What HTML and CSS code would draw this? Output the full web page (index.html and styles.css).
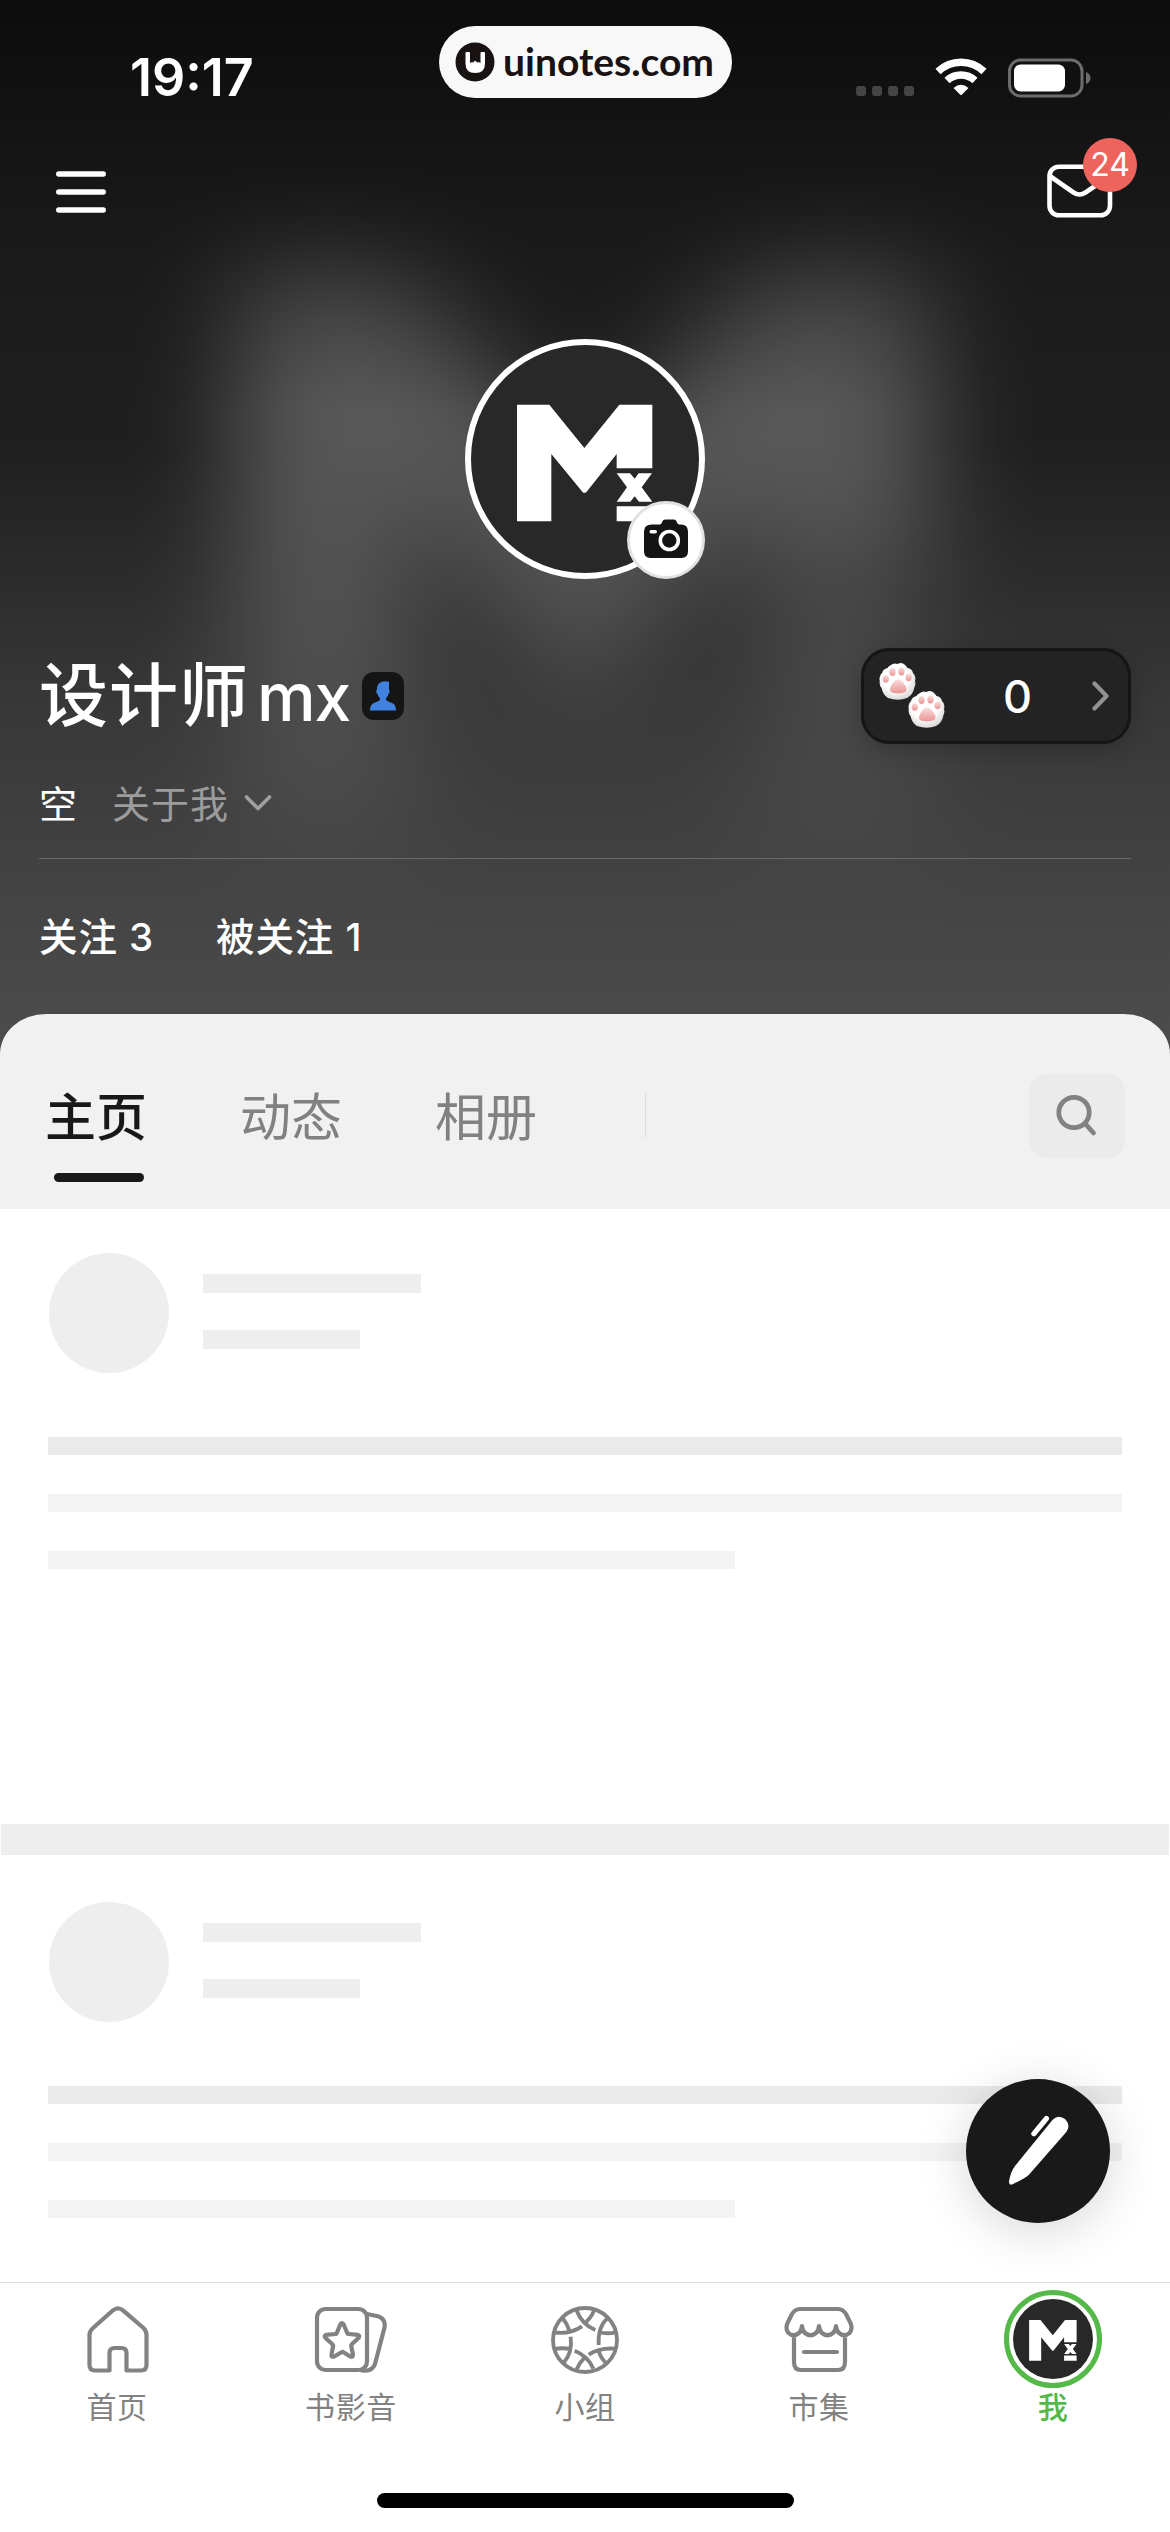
FILE: index.html
```html
<!DOCTYPE html>
<html lang="zh-CN">
<head>
<meta charset="utf-8">
<title>设计师mx</title>
<link rel="stylesheet" href="styles.css">
</head>
<body>
<svg width="0" height="0" class="defs" aria-hidden="true">
  <defs>
    <symbol id="logo-m" viewBox="93 75 684 684">
      <path d="M231 254H328L433 384L538 254H637V445H530V402L440 515Q433 522 427 515L334 402V604H231Z"/>
      <path d="M530 460H570L584 476L596 460H636L605 502L637 545H597L584 529L571 545H530L561 502Z"/>
      <path d="M530 559H637V604H530Z"/>
    </symbol>
    <radialGradient id="fur" cx=".45" cy=".4" r=".6"><stop offset=".6" stop-color="#fff"/><stop offset="1" stop-color="#dcdad8"/></radialGradient>
    <linearGradient id="pad" x1="0" y1="0" x2="0" y2="1"><stop offset="0" stop-color="#f9dcda"/><stop offset="1" stop-color="#ea9493"/></linearGradient>
    <symbol id="paw" viewBox="0 0 37 37">
      <path d="M12 2Q15-.5 18.500 1Q22-1 25.500 1.500Q28 3.500 28.500 5Q33 5.500 34 10Q37.500 13 36 18Q37 21 35.500 24Q34 32 28 35Q19 38.500 9 35Q4 32 2.500 25Q0 22 .8 18Q-.5 13 3 10Q4 6 8.500 5Q9 3.500 12 2Z" fill="url(#fur)"/>
      <ellipse cx="13.500" cy="9" rx="3.100" ry="3.900" fill="url(#pad)"/>
      <ellipse cx="22.500" cy="8.500" rx="3.100" ry="3.900" fill="url(#pad)"/>
      <ellipse cx="6.800" cy="16" rx="3.100" ry="3.700" fill="url(#pad)"/>
      <ellipse cx="29.600" cy="14.500" rx="3.100" ry="3.700" fill="url(#pad)"/>
      <path d="M19 16.500Q23 17 26.500 23Q29.500 28.500 24 29.800Q19 30.800 14 29.800Q9 28.500 12 23Q15 17 19 16.500Z" fill="url(#pad)"/>
    </symbol>
  </defs>
</svg>
<main class="page">
  <svg class="backdrop" viewBox="0 0 1170 1080" aria-hidden="true">
    <defs>
      <filter id="soft" x="-50%" y="-50%" width="200%" height="200%"><feGaussianBlur stdDeviation="52"/></filter>
      <linearGradient id="shade" x1="0" y1="0" x2="0" y2="1"><stop offset="0" stop-color="#0c0c0c"/><stop offset=".1" stop-color="#0e0e0e" stop-opacity=".75"/><stop offset=".25" stop-color="#111" stop-opacity=".3"/><stop offset=".38" stop-color="#111" stop-opacity="0"/></linearGradient>
      <linearGradient id="rise" x1="0" y1="0" x2="0" y2="1"><stop offset=".41" stop-color="#4a4a4a" stop-opacity="0"/><stop offset=".57" stop-color="#4a4a4a" stop-opacity=".38"/><stop offset=".65" stop-color="#484848" stop-opacity=".6"/><stop offset=".76" stop-color="#484848" stop-opacity=".78"/><stop offset=".86" stop-color="#494949" stop-opacity=".92"/><stop offset=".95" stop-color="#4b4b4b"/></linearGradient>
    </defs>
    <rect width="1170" height="1080" fill="#1f1f1f"/>
    <svg x="0" y="-50" width="1170" height="1170" overflow="visible"><use href="#logo-m" width="1170" height="1170" fill="#fff" opacity=".25" filter="url(#soft)"/></svg>
    <rect width="1170" height="1080" fill="url(#shade)"/>
    <rect width="1170" height="1080" fill="url(#rise)"/>
  </svg>

  <header class="hero">
    <div class="status">
      <span class="clock">19:17</span>
      <div class="pill">
        <svg width="40" height="40" viewBox="0 0 40 40"><circle cx="20" cy="20" r="19.500" fill="#181312"/><path d="M10.500 11Q10.500 10 11.500 10H14Q15 10 15 11V21L20.200 18.500L25.500 21V11Q25.500 10 26.500 10H29Q30 10 30 11V21.500Q30 31 20.200 31Q10.500 31 10.500 21.500Z" fill="#fff"/><path d="M17.500 9.500H23V21L20.200 18.500L17.500 21Z" fill="#181312"/></svg>
        <span>uinotes.com</span>
      </div>
      <div class="signals">
        <div class="dots"><i></i><i></i><i></i><i></i></div>
        <svg class="wifi" width="52" height="38" viewBox="0 0 52 38"><g fill="none" stroke="#fff" stroke-width="7.500"><path d="M3 13.500Q13 4.300 26 4.300Q39 4.300 49 13.500"/><path d="M12 22.500Q18 17 26 17Q34 17 40 22.500"/></g><path d="M18.500 30Q26 23.500 33.500 30L27 36.500Q26 37.500 25 36.500Z" fill="#fff"/></svg>
        <svg class="battery" width="84" height="40" viewBox="0 0 84 40"><rect x="1.500" y="2" width="72.500" height="36" rx="11" fill="none" stroke="#6c6c6c" stroke-width="3"/><rect x="6" y="6.500" width="51" height="27" rx="6.500" fill="#fff"/><path d="M78 14Q82.500 16 82.500 20Q82.500 24 78 26Z" fill="#6c6c6c"/></svg>
      </div>
    </div>

    <nav class="topbar">
      <svg width="50" height="44" viewBox="0 0 50 44" stroke="#fff" stroke-width="5.300" stroke-linecap="round"><path d="M2.700 4H47.300M2.700 22H47.300M2.700 40H47.300"/></svg>
      <div class="mail">
        <svg width="66" height="54" viewBox="0 0 66 54" fill="none" stroke="#fff" stroke-width="4.600" stroke-linejoin="round"><rect x="2.500" y="2.700" width="60.500" height="48.600" rx="9.500"/><path d="M3.500 12.500L26.500 28.500Q32.500 32.500 38.500 28.500L62 12.500"/></svg>
        <span class="badge">24</span>
      </div>
    </nav>

    <div class="avatar">
      <svg width="228" height="228"><use href="#logo-m" fill="#fff"/></svg>
      <span class="camera"><svg width="44" height="40" viewBox="0 0 44 40"><path d="M8 5.500H15.500Q17 5.500 17.700 4L18.800 1.800Q19.600.4 21.500.4H29.500Q31.400.4 32.200 1.800L33.200 4Q34 5.500 35.500 5.500H37Q44 5.500 44 12.500V32.500Q44 39 37.500 39H6.500Q0 39 0 32.500V12.500Q0 5.500 8 5.500Z" fill="#141414"/><rect x="5.500" y="11" width="7.500" height="3.600" rx="1.800" fill="#fff"/><circle cx="25.300" cy="21.500" r="9" fill="none" stroke="#fff" stroke-width="3.600"/></svg></span>
    </div>

    <section class="identity">
      <h1>设计师<span>mx</span></h1>
      <span class="person"><svg width="26" height="30" viewBox="0 0 26 30"><path d="M13 .5Q15 0 19 .8V9Q20 9 19.600 11Q19 12.500 18.500 13Q17.500 16 16 17V19Q18 20.500 21.500 21.800Q26 23.500 26 29.500H0Q0 23.500 4.500 21.800Q8 20.500 10 19V17Q8.300 16 7.500 13Q6.500 12.500 6.300 11Q6 9 7 9Q6.500 1.500 13 .5Z" fill="#4282df"/></svg></span>
      <div class="paws">
        <svg width="66" height="66"><use href="#paw" width="37" height="37"/><use href="#paw" x="29" y="28" width="37" height="37"/></svg>
        <b>0</b>
        <svg width="17" height="30" viewBox="0 0 17 30" fill="none" stroke="#919191" stroke-width="4.200" stroke-linecap="round" stroke-linejoin="round"><path d="M2.500 2.500L14.500 15L2.500 27.500"/></svg>
      </div>
    </section>

    <section class="bio"><span>空</span><span class="about">关于我</span><svg width="28" height="18" viewBox="0 0 28 18" fill="none" stroke="#a0a0a0" stroke-width="3.600" stroke-linecap="round" stroke-linejoin="round"><path d="M2.500 3L14 14.500L25.500 3"/></svg></section>
    <section class="stats"><span>关注 3</span><span>被关注 1</span></section>
  </header>

  <nav class="tabs">
    <a class="tab active">主页</a><a class="tab">动态</a><a class="tab">相册</a>
    <i class="rule"></i>
    <span class="search"><svg width="42" height="46" viewBox="0 0 42 46" fill="none" stroke="#828282" stroke-width="4.800" stroke-linecap="round"><circle cx="18" cy="19.500" r="15.200"/><path d="M29.500 31L37.500 40"/></svg></span>
  </nav>

  <div class="feed">
    <article class="card">
      <div class="who"><i class="disc"></i><div class="meta"><i class="bar"></i><i class="bar short"></i></div></div>
      <div class="lines"><i class="first"></i><i></i><i class="half"></i></div>
    </article>
    <hr class="band">
    <article class="card">
      <div class="who"><i class="disc"></i><div class="meta"><i class="bar"></i><i class="bar short"></i></div></div>
      <div class="lines"><i class="first"></i><i></i><i class="half"></i></div>
    </article>
    <span class="compose"><svg width="144" height="144" viewBox="0 0 432 432" fill="#fff"><path d="M260 122Q278 105 298 121Q315 140 301 159L188 288Q178 297 140 316Q128 320 129 307Q134 278 147 261Z"/><path d="M241 119L204 164" stroke="#fff" stroke-width="16" stroke-linecap="round"/></svg></span>
  </div>

  <footer class="tabbar">
    <a><span class="icon home-icon"><svg width="62" height="68" viewBox="0 0 62 68"><path d="M22.500 64.500V47Q22.500 42 27.500 42H34.500Q39.500 42 39.500 47V64.500H54Q59.500 64.500 59.500 59V29Q59.500 25 56.500 22L36 4.300Q31 .3 26 4.300L6 22Q2.500 25 2.500 29V59Q2.500 64.500 8 64.500Z"/></svg></span>首页</a>
    <a><span class="icon"><svg width="74" height="68" viewBox="0 0 74 68"><rect x="3" y="3" width="50" height="61" rx="8.500"/><path d="M53 8L64 10.300Q72 13 70.500 21.500L61 58Q58 66 48 64.500"/><path d="M28 17Q29 17 29.700 18.500L33 26.500Q33.500 28 35 28L43.500 28.800Q46.500 29.500 44.500 32L38 38Q37 39 37.300 40.500L39 48.500Q39 51.500 36.200 50.500L29.500 46.200Q28.500 45.500 27.500 46.200L20.200 50.500Q17 51.500 17.500 48.500L19 40.500Q19.300 39 18.200 38L11.500 32Q9.500 29.500 12.500 28.800L21 28Q22.500 28 23 26.500L26.300 18.500Q27 17 28 17Z"/></svg></span>书影音</a>
    <a><span class="icon"><svg width="68" height="68" viewBox="333 138 204 204" class="ball"><circle cx="435" cy="240" r="96"/><g stroke-linecap="butt"><path d="M409 150Q426 194 466 210M462 152Q451 177 433 190M502 175Q473 200 476 255M477 216Q500 223 527 217M526 266Q478 262 446 284M477 275Q483 296 500 310M460 326Q444 288 404 272M410 328Q418 308 434 293M371 308Q398 278 392 230M393 268Q370 262 343 267M342 217Q390 224 426 199M388 212Q382 192 368 175"/></g></svg></span>小组</a>
    <a><span class="icon"><svg width="72" height="68" viewBox="0 0 72 68"><path d="M17 3H55Q60 3 63 8L67.500 17Q70 23 66.500 27Q61.500 31.500 56 27Q53.500 25 53 20Q52.500 25 50 27Q44.500 31.500 39 27Q36.500 25 36 20Q35.500 25 33 27Q27.500 31.500 22 27Q19.500 25 19 20Q18.500 25 16 27Q10.500 31.500 5.500 27Q2 23 4.500 17L9 8Q12 3 17 3ZM11 29V56Q11 64 18 64H55Q62 64 62 56V29M21 46H54"/></svg></span>市集</a>
    <a class="me"><span class="icon ring"><svg width="80" height="80"><use href="#logo-m" fill="#fff"/></svg></span>我</a>
  </footer>
  <div class="home"><i></i></div>
</main>
</body>
</html>
```
FILE: styles.css
```css
* { box-sizing: border-box; margin: 0; padding: 0; }
body { width: 1170px; background: #fff; font-family: Inter, "Noto Sans CJK SC", sans-serif; }
i { display: block; font-style: normal; }
svg { display: block; flex: none; }
.defs { position: absolute; }
.page { position: relative; display: flex; flex-direction: column; height: 2532px; overflow: hidden; }
.backdrop { position: absolute; top: 0; left: 0; width: 1170px; height: 1080px; }

.hero { position: relative; height: 1014px; flex: none; color: #fff; }
.status { display: grid; grid-template-columns: 439px 293px 438px; height: 150px; align-items: start; }
.clock { padding: 47px 0 0 130px; font-size: 52px; line-height: 62px; font-weight: 600; letter-spacing: 0; }
.pill { display: flex; align-items: center; gap: 8px; height: 72px; margin-top: 26px; padding-left: 16px; border-radius: 36px; background: #f8f8f8; color: #181312; font: 700 39px/72px Lato, sans-serif; white-space: nowrap; }
.pill span { padding-bottom: 3px; }
.signals { display: flex; align-items: flex-start; padding: 58px 0 0 124px; }
.dots { display: flex; gap: 6px; margin-top: 28px; }
.dots i { width: 10px; height: 10px; border-radius: 3px; background: #454545; }
.wifi { margin-left: 21px; }
.battery { margin-left: 21px; }

.topbar { display: flex; justify-content: space-between; padding: 14px 57px 0 56px; height: 189px; align-items: flex-start; }
.topbar > svg { margin-top: 6px; }
.mail { position: relative; }
.badge { position: absolute; left: 36px; top: -26px; width: 54px; height: 54px; border-radius: 50%; background: #ee645d; font-size: 32px; line-height: 54px; text-align: center; }

.avatar { position: relative; width: 240px; height: 240px; margin: 0 auto; border: 6px solid #fff; border-radius: 50%; background: #282828; }
.camera { position: absolute; right: -6px; bottom: -6px; width: 78px; height: 78px; display: flex; align-items: center; justify-content: center; border-radius: 50%; border: 3px solid #e2e2e2; background: #fff; }
.camera svg { margin-bottom: 3px; }

.identity { display: flex; align-items: center; height: 96px; margin: 69px 39px 0; }
h1 { font-size: 69px; line-height: 96px; font-weight: 500; letter-spacing: 1px; white-space: nowrap; }
h1 span { margin-left: 8px; letter-spacing: -1px; font-size: 66px; }
.person { display: flex; align-items: center; justify-content: center; width: 42px; height: 48px; margin-left: 12px; border-radius: 12px; background: #151515; }
.paws { display: flex; align-items: center; width: 270px; height: 96px; margin-left: auto; padding: 0 19px 0 15px; border: 3px solid #151515; border-radius: 28px; background: #232323; box-shadow: 0 6px 24px rgba(0, 0, 0, .2); }
.paws b { flex: 1; font-size: 45px; font-weight: 500; text-align: center; padding-right: 2px; }

.bio { display: flex; align-items: center; height: 115px; margin: 0 39px; border-bottom: 1px solid #6a6a6a; font-size: 38px; letter-spacing: 1px; }
.bio svg { margin: 3px 0 0 15px; }
.about { margin-left: 34px; color: #9c9c9c; }
.stats { display: flex; gap: 62px; margin: 0 39px; font-size: 38.5px; line-height: 157px; font-weight: 500; letter-spacing: .9px; }

.tabs { position: relative; display: flex; flex: none; align-items: flex-start; height: 195px; padding: 59px 45px 0 45px; border-radius: 46px 46px 0 0 / 40px 40px 0 0; background: #f1f1f1; font-size: 51px; line-height: 90px; color: #818181; }
.tab { display: flex; flex-direction: column; width: 102px; margin-right: 93px; white-space: nowrap; }
.active { color: #181818; font-weight: 500; }
.active::after { content: ""; width: 90px; height: 9px; margin: 10px 0 0 9px; border-radius: 5px; background: #181818; }
.rule { width: 1px; height: 45px; margin: 20px 0 0 15px; background: #dedede; }
.search { display: flex; align-items: center; justify-content: center; width: 96px; height: 84px; margin: 1px 0 0 auto; border-radius: 18px; background: #ebebeb; }

.feed { position: relative; flex: 1; min-height: 0; background: #fff; }
.card { height: 615px; padding: 44px 48px 0; }
.who { display: flex; gap: 34px; padding-left: 1px; height: 120px; }
.disc { width: 120px; height: 120px; border-radius: 50%; background: #eee; }
.meta { display: flex; flex-direction: column; gap: 37px; padding-top: 21px; }
.bar { width: 218px; height: 19px; background: #eee; }
.short { width: 157px; }
.lines { display: flex; flex-direction: column; gap: 39px; margin-top: 64px; }
.lines i { height: 18px; background: #f3f3f3; }
.lines .first { background: #eaeaea; }
.lines .half { width: 687px; }
.band { height: 31px; margin: 0 1px 3px; border: 0; background: #eee; }
.compose { position: absolute; right: 60px; bottom: 59px; width: 144px; height: 144px; border-radius: 50%; background: #191919; box-shadow: 0 8px 50px rgba(0, 0, 0, .16); }

.tabbar { position: relative; z-index: 1; flex: none; display: grid; grid-template-columns: repeat(5, 1fr); height: 211px; border-top: 1px solid #dcdfdf; background: #fff; }
.tabbar a { display: flex; flex-direction: column; align-items: center; padding-top: 7px; font-size: 30px; line-height: 36px; letter-spacing: .6px; color: #828282; }
.tabbar .icon { display: flex; align-items: center; justify-content: center; height: 98px; padding-top: 2px; margin-bottom: 1px; fill: none; stroke: #828282; stroke-width: 4.2; stroke-linecap: round; stroke-linejoin: round; }
.tabbar .home-icon { padding-left: 2px; }
.tabbar .ball { stroke-width: 11.5; }
.tabbar .me { color: #55b949; font-weight: 500; }
.tabbar .ring { width: 98px; padding-top: 0; border: 5px solid #55b949; border-radius: 50%; stroke: none; }
.ring svg { border-radius: 50%; background: #282828; }
.home { position: relative; z-index: 1; flex: none; height: 39px; background: #fff; }
.home i { width: 417px; height: 15px; margin: 0 auto; border-radius: 8px; background: #000; }
```
